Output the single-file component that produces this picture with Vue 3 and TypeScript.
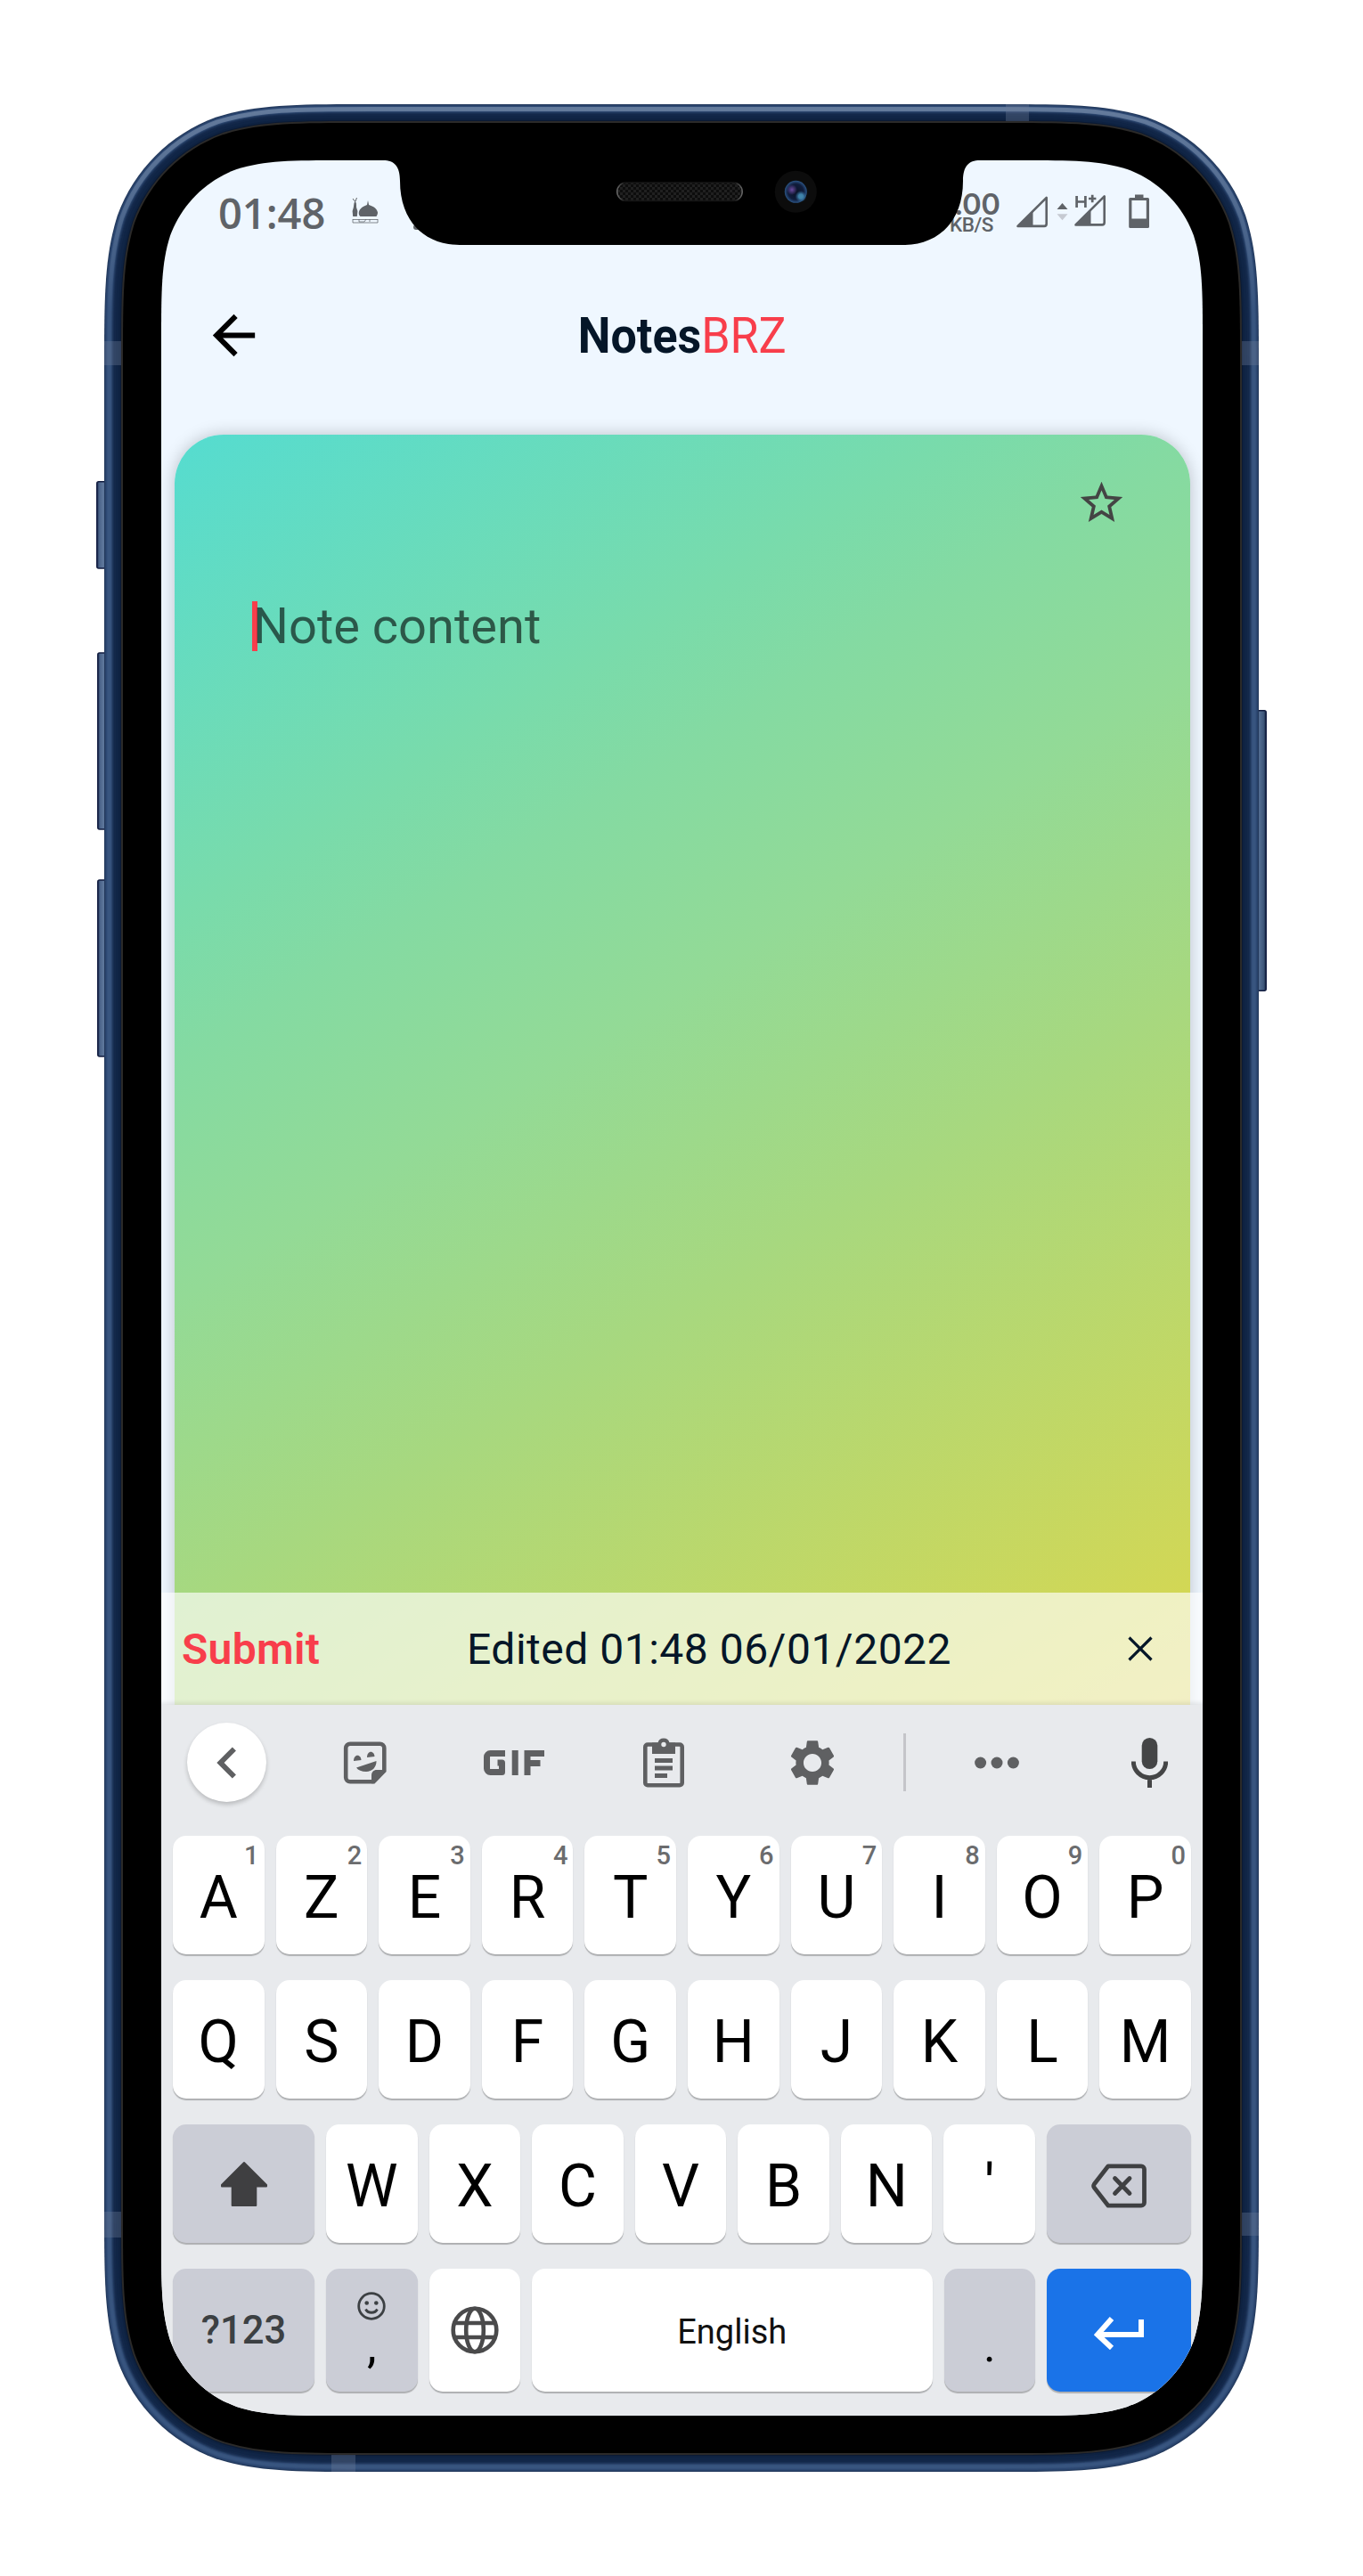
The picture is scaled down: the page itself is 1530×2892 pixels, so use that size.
<script setup lang="ts">
interface KeyDef {
  label: string
  hint?: string
}

interface Band {
  inset: number
  color: string
}

const topRow: KeyDef[] = [...'AZERTYUIOP'].map((label, i) => ({ label, hint: String((i + 1) % 10) }))
const homeRow: KeyDef[] = [...'QSDFGHJKLM'].map((label) => ({ label }))
const bottomRow: KeyDef[] = [..."WXCVBN'"].map((label) => ({ label }))

// Rounded rectangle with continuous (smoothed) corners.
function squircle(x: number, y: number, w: number, h: number, r: number): string {
  const corner = [
    [1.52866, 0], [1.08849, 0], [0.86841, 0], [0.63149, 0.07491],
    [0.37282, 0.16906], [0.16906, 0.37282], [0.07491, 0.63149],
    [0, 0.86841], [0, 1.08849], [0, 1.52866],
  ]
  const place = (sx: number, sy: number, reverse: boolean): string => {
    const pts = corner.map(([a, b]) => {
      const px = sx > 0 ? x + a * r : x + w - a * r
      const py = sy > 0 ? y + b * r : y + h - b * r
      return `${px.toFixed(2)} ${py.toFixed(2)}`
    })
    if (reverse) pts.reverse()
    return `${pts[0]} C${pts.slice(1, 4).join(' ')} C${pts.slice(4, 7).join(' ')} C${pts.slice(7, 10).join(' ')}`
  }
  return `M${place(1, 1, true)} L${place(-1, 1, false)} L${place(-1, -1, true)} L${place(1, -1, false)} Z`
}

const bands: Band[] = [
  { inset: 0, color: '#23395c' },
  { inset: 1, color: '#29436b' },
  { inset: 2, color: '#2d4872' },
  { inset: 3, color: '#34507b' },
  { inset: 4, color: '#38557f' },
  { inset: 7, color: '#34507a' },
  { inset: 8, color: '#2a446c' },
  { inset: 9, color: '#1f375c' },
  { inset: 10, color: '#182e52' },
  { inset: 11, color: '#13284a' },
  { inset: 13, color: '#102546' },
  { inset: 16, color: '#0e2241' },
  { inset: 18, color: '#0b1a33' },
  { inset: 19, color: '#2b2a29' },
  { inset: 21, color: '#000000' },
]

const bandPath = (inset: number): string =>
  squircle(inset, inset, 1296 - inset * 2, 2658 - inset * 2, 198 - inset)

const screenClip = { clipPath: `path("${squircle(0, 0, 1169, 2532, 134)}")` }
</script>

<template>
  <div class="page">
    <div class="phone">
      <svg class="frame" width="1314" height="2658" viewBox="-9 0 1314 2658">
        <defs>
          <linearGradient id="btnL" x1="0" x2="1" y1="0" y2="0">
            <stop offset="0" stop-color="#1b2b4f" />
            <stop offset=".18" stop-color="#4a6389" />
            <stop offset=".5" stop-color="#5f789c" />
            <stop offset="1" stop-color="#3f5a80" />
          </linearGradient>
          <linearGradient id="btnR" x1="1" x2="0" y1="0" y2="0">
            <stop offset="0" stop-color="#13233f" />
            <stop offset=".18" stop-color="#3d5679" />
            <stop offset=".5" stop-color="#526c90" />
            <stop offset="1" stop-color="#3a5479" />
          </linearGradient>
          <linearGradient id="shine" gradientUnits="userSpaceOnUse" x1="0" y1="0" x2="0" y2="230">
            <stop offset="0" stop-color="#8295b0" stop-opacity=".6" />
            <stop offset=".4" stop-color="#8295b0" stop-opacity=".4" />
            <stop offset="1" stop-color="#8295b0" stop-opacity="0" />
          </linearGradient>
        </defs>
        <g stroke="#121d40" stroke-width="1.5">
          <rect x="-8.2" y="423.7" width="14" height="97.2" rx="2" fill="url(#btnL)" />
          <rect x="-7.2" y="616" width="13" height="198" rx="2" fill="url(#btnL)" />
          <rect x="-7.2" y="871" width="13" height="198" rx="2" fill="url(#btnL)" />
          <rect x="1290" y="680.7" width="14.2" height="314.5" rx="2" fill="url(#btnR)" />
        </g>
        <path v-for="b in bands" :key="b.inset" :d="bandPath(b.inset)" :fill="b.color" />
        <path :d="bandPath(5.5)" fill="none" stroke="url(#shine)" stroke-width="5" />
        <g fill="#6c7c98" fill-opacity=".35">
          <rect x="0" y="266" width="19" height="27" />
          <rect x="1277" y="266" width="19" height="27" />
          <rect x="1012" y="0" width="26" height="19" />
          <rect x="0" y="2366" width="19" height="29" />
          <rect x="1277" y="2367" width="19" height="26" />
          <rect x="255" y="2639" width="27" height="19" />
        </g>
      </svg>

      <div class="screen" :style="screenClip">
        <div class="app">
          <div class="status">
            <span class="clock">01:48</span>
            <svg class="mosque" width="32" height="32" viewBox="0 0 32 32" fill="#5f6368">
              <path d="M3.4 7.5 4.6 4l1.3 3.5.2 4.5 1.3 4-.6 6H2.2l-.6-6 1.2-4z" />
              <path d="M2 2l2.400 3M6.500 1 5 5" stroke="#5f6368" fill="none" />
              <path d="M19 4l1.100 5c5 1.500 9.400 4.600 9.900 8.600 0 2-.8 3.400-1.500 4.400H10.500C9.300 21 8.500 19.400 8.800 17.400c.6-4 4.600-6.900 9.200-8.400z" />
              <path d="M2 25.500h28M2 29h28M2 25v4M9 25v3h6l2-3M21 25v3M30 25v4" stroke="#5f6368" stroke-width="1" fill="none" opacity=".75" />
            </svg>
            <span class="speck"></span>
            <div class="speed">
              <span class="rate">.00</span>
              <span class="unit">KB/S</span>
            </div>
            <svg class="signals" width="154" height="44" viewBox="0 0 154 44" fill="none" stroke="#5f6368">
              <path d="M5.500 36.900 37.700 4.800V34.300c0 1.700-1 2.600-2.600 2.600z" stroke-width="2.600" stroke-linejoin="round" />
              <path d="M5 37.500 22.500 20v17.500z" fill="#5f6368" stroke="none" />
              <path d="M49.500 18l6-7 6 7z" fill="#5f6368" stroke="none" />
              <path d="M49.500 23.300l6 7 6-7z" fill="#c6cad2" stroke="none" />
              <path d="M70.500 35.400 102.700 3.300V32.800c0 1.700-1 2.600-2.600 2.600z" stroke-width="2.600" stroke-linejoin="round" />
              <path d="M70 36 87.500 18.500V36z" fill="#5f6368" stroke="none" />
              <path d="M68 0h27v4.500L82 17.500H68z" fill="#eff7ff" stroke="none" />
              <path d="M71.600 3v13M81.400 3v13M71.600 9.500h9.800M85 6h8.400M89.200 1.800v8.400" stroke-width="2.700" />
              <path d="M131.800 6.500h19.600v31h-19.600z" stroke-width="3.200" stroke-linejoin="round" />
              <path d="M131 28.500h21v9h-21zM137 1.500h9.500v5H137z" fill="#5f6368" stroke="none" />
            </svg>
          </div>

          <header class="bar">
            <svg class="back" width="71" height="71" viewBox="0 0 24 24">
              <path d="M20 11H7.830l5.590-5.590L12 4l-8 8 8 8 1.410-1.410L7.830 13H20v-2z" />
            </svg>
            <h1 class="title"><b>Notes</b><span>BRZ</span></h1>
          </header>

          <main class="note">
            <svg class="star" width="57" height="57" viewBox="0 0 24 24" fill="#444">
              <path d="M22 9.240l-7.190-.62L12 2 9.190 8.630 2 9.240l5.460 4.730L5.820 21 12 17.270 18.180 21l-1.630-7.030L22 9.240zM12 15.400l-3.760 2.270 1-4.280-3.320-2.880 4.380-.38L12 6.100l1.710 4.040 4.380.38-3.320 2.880 1 4.280L12 15.400z" />
            </svg>
            <div class="field"><i class="caret"></i><span class="placeholder">Note content</span></div>
          </main>

          <div class="actions">
            <span class="submit">Submit</span>
            <span class="edited">Edited 01:48 06/01/2022</span>
            <svg class="close" width="28" height="28" viewBox="0 0 28 28" stroke="#051628" stroke-width="3.200">
              <path d="M1.500 1.500l25 25M26.500 1.500l-25 25" />
            </svg>
          </div>
        </div>

        <div class="keyboard">
          <div class="tools">
            <div class="tool">
              <span class="round">
                <svg width="70" height="70" viewBox="0 0 24 24" fill="#5f6062">
                  <path d="M15.410 7.410L14 6l-6 6 6 6 1.410-1.410L10.830 12z" />
                </svg>
              </span>
            </div>
            <div class="tool">
              <svg width="50" height="50" viewBox="0 0 50 50">
                <path d="M8 3.700h33.500a4.800 4.800 0 0 1 4.800 4.800V34L34.500 46.300H8a4.800 4.800 0 0 1-4.800-4.800V8.500A4.800 4.800 0 0 1 8 3.700z" fill="none" stroke="#5f6062" stroke-width="4.600" />
                <path d="M48 34 34.500 48.300H32V39.500c0-4 2.200-6.500 6-6.500h10zM12 23c0-4 2-6.300 4.300-6.300S20.500 19 20.500 22zM27 19c0-4 2-6.300 4.300-6.300S35.500 15 35.500 18zM15 30.500 37.500 23c.3 7-4.800 12-11.500 12-5 0-9-1.600-11-4.500z" fill="#5f6062" />
              </svg>
            </div>
            <div class="tool">
              <svg width="68" height="28" viewBox="0 0 68 28" fill="none" stroke="#5f6062" stroke-width="7">
                <path d="M24 3.500H7.500a4 4 0 0 0-4 4v13a4 4 0 0 0 4 4h13V14H15.500" stroke-linejoin="round" />
                <path d="M35.200 0v28M49 28V3.500h19M49 14.500h14.500" />
              </svg>
            </div>
            <div class="tool">
              <svg width="46" height="56" viewBox="0 0 46 56">
                <path d="M5 7.500h36a2.700 2.700 0 0 1 2.700 2.700v40.300a2.700 2.700 0 0 1-2.700 2.700H5a2.700 2.700 0 0 1-2.700-2.700V10.200A2.700 2.700 0 0 1 5 7.500z" fill="none" stroke="#5f6062" stroke-width="4.600" />
                <path d="M10 5.500h6.500a6.700 6.700 0 0 1 13 0H36V18H10zM13 23h20v5H13zM13 31.500h20v5H13zM13 40h14v5H13z" fill="#5f6062" />
                <circle cx="23" cy="7.500" r="2.700" fill="#e8eaed" />
              </svg>
            </div>
            <div class="tool">
              <svg width="62" height="62" viewBox="0 0 24 24" fill="#5f6062">
                <path d="M19.140 12.940c.04-.3.060-.61.060-.94 0-.32-.02-.64-.07-.94l2.030-1.580c.18-.14.23-.41.12-.61l-1.920-3.320c-.12-.22-.37-.29-.59-.22l-2.390.96c-.5-.38-1.030-.7-1.620-.94l-.36-2.540c-.04-.24-.24-.41-.48-.41h-3.840c-.24 0-.43.17-.47.41l-.36 2.540c-.59.24-1.130.57-1.620.94l-2.390-.96c-.22-.08-.47 0-.59.22L2.740 8.870c-.12.21-.08.47.12.61l2.030 1.580c-.05.3-.09.63-.09.94s.02.640.070.940l-2.030 1.580c-.18.14-.23.41-.12.61l1.920 3.320c.12.22.37.29.59.22l2.390-.96c.5.38 1.030.7 1.620.94l.36 2.540c.05.24.24.41.48.41h3.840c.24 0 .44-.17.47-.41l.36-2.540c.59-.24 1.130-.56 1.620-.94l2.390.96c.22.08.47 0 .59-.22l1.920-3.320c.12-.22.070-.47-.12-.61l-2.010-1.580zM12 15.900c-2.150 0-3.900-1.750-3.900-3.900s1.750-3.900 3.900-3.900 3.900 1.750 3.900 3.900-1.750 3.900-3.900 3.900z" />
              </svg>
            </div>
            <div class="tool"><span class="rule"></span></div>
            <div class="tool">
              <svg width="50" height="14" viewBox="0 0 50 14" fill="#5f6062">
                <circle cx="6.600" cy="7" r="6.500" />
                <circle cx="25" cy="7" r="6.500" />
                <circle cx="43.400" cy="7" r="6.500" />
              </svg>
            </div>
            <div class="tool mic">
              <svg width="41" height="56" viewBox="0 0 41 56">
                <rect x="11.700" y="0" width="17.600" height="35" rx="8.800" fill="#444546" />
                <path d="M2.300 26.500a18.200 18.200 0 0 0 36.400 0M20.500 44v12" fill="none" stroke="#444546" stroke-width="5" />
              </svg>
            </div>
          </div>

          <div class="row">
            <div v-for="k in topRow" :key="k.label" class="key">
              <sup class="hint">{{ k.hint }}</sup>{{ k.label }}
            </div>
          </div>
          <div class="row">
            <div v-for="k in homeRow" :key="k.label" class="key">{{ k.label }}</div>
          </div>
          <div class="row">
            <div class="key dark left">
              <svg width="54" height="52" viewBox="0 0 54 52" fill="#3f3f41" stroke="#3f3f41" stroke-width="2" stroke-linejoin="round">
                <path d="M27 2 52 27v1.500H40.300V50H13.700V28.500H2V27z" />
              </svg>
            </div>
            <div v-for="k in bottomRow" :key="k.label" class="key">{{ k.label }}</div>
            <div class="key dark right">
              <svg class="erase" width="64" height="52" viewBox="0 0 64 52" fill="none" stroke="#3f4042" stroke-width="4.800" stroke-linejoin="round" stroke-linecap="round">
                <path d="M20 3.800h37a3.500 3.500 0 0 1 3.500 3.500v37.400a3.500 3.500 0 0 1-3.500 3.500H20L4.300 28c-.9-1.300-.9-2.700 0-4z" />
                <path d="M27.500 17.500 44 34.500M44 17.500 27.500 34.500" />
              </svg>
            </div>
          </div>
          <div class="row last">
            <div class="key dark left symbols">?123</div>
            <div class="key dark fixed comma">
              <svg class="smile" width="34" height="34" viewBox="0 0 34 34" fill="none" stroke="#3c4043" stroke-width="2.800">
                <circle cx="17" cy="17" r="14.300" />
                <path d="M10.500 20.500c2.500 5 10.500 5 13 0" />
                <g fill="#3c4043" stroke="none"><circle cx="11.700" cy="13.500" r="2.300" /><circle cx="22.300" cy="13.500" r="2.300" /></g>
              </svg>
              <span>,</span>
            </div>
            <div class="key fixed">
              <svg width="54" height="54" viewBox="0 0 54 54" fill="none" stroke="#4a4a4b" stroke-width="4.600">
                <circle cx="27" cy="27" r="24.300" />
                <ellipse cx="27" cy="27" rx="9.800" ry="24.300" />
                <path d="M4.500 19h45M4.500 35h45" />
              </svg>
            </div>
            <div class="key space">English</div>
            <div class="key dark fixed dot"><span>.</span></div>
            <div class="key enter right">
              <svg width="58" height="38" viewBox="0 0 58 38" fill="none" stroke="#fff" stroke-width="6">
                <path d="M54 4v17H6M21 3 5 21 21 36" />
              </svg>
            </div>
          </div>
        </div>
      </div>

      <svg class="notch" width="680" height="100" viewBox="425 175 680 100">
        <defs>
          <pattern id="mesh" width="6" height="6" patternUnits="userSpaceOnUse">
            <rect width="6" height="6" fill="#0d0d0d" />
            <path d="M0 0h3v3H0zM3 3h3v3H3z" fill="#202020" />
          </pattern>
          <linearGradient id="rim" x1="0" x2="1" y1="0" y2="0">
            <stop offset="0" stop-color="#6a6a6a" />
            <stop offset=".06" stop-color="#151515" />
            <stop offset=".94" stop-color="#151515" />
            <stop offset="1" stop-color="#6a6a6a" />
          </linearGradient>
          <radialGradient id="violet"><stop offset="0" stop-color="#6a4a9e" /><stop offset="1" stop-color="#6a4a9e" stop-opacity="0" /></radialGradient>
          <radialGradient id="cyan"><stop offset="0" stop-color="#4388ac" /><stop offset=".4" stop-color="#3d7fa6" /><stop offset="1" stop-color="#2c6090" stop-opacity="0" /></radialGradient>
          <radialGradient id="lens"><stop offset="0" stop-color="#0a1226" /><stop offset=".7" stop-color="#101d3c" /><stop offset="1" stop-color="#2b5485" /></radialGradient>
        </defs>
        <path d="M425 175V180H430C443 180 449 187 449 203C449 250 478 275 516 275H1014C1052 275 1081 250 1081 203C1081 187 1087 180 1100 180H1105V175Z" fill="#000" />
        <rect x="692.700" y="205" width="140.500" height="20.500" rx="10.200" fill="url(#mesh)" stroke="url(#rim)" stroke-width="1.500" />
        <circle cx="893.300" cy="215.300" r="23.500" fill="#0c0c0c" />
        <circle cx="893.300" cy="215.300" r="12.500" fill="url(#lens)" />
        <circle cx="889" cy="213" r="6" fill="url(#violet)" />
        <circle cx="899" cy="220.500" r="6.500" fill="url(#cyan)" />
      </svg>
    </div>
  </div>
</template>

<style>
html,
body {
  margin: 0;
  background: #fff;
}
</style>

<style scoped>
.page {
  box-sizing: border-box;
  width: 1530px;
  height: 2892px;
  padding: 117px;
  background: #fff;
  font-family: Roboto, "Liberation Sans", sans-serif;
  overflow: hidden;
}
.phone {
  position: relative;
  box-sizing: border-box;
  width: 1296px;
  height: 2658px;
  padding: 63px 63px 63px 64px;
}
.frame {
  position: absolute;
  left: -9px;
  top: 0;
}
.notch {
  position: absolute;
  left: 308px;
  top: 58px;
}
.screen {
  position: relative;
  display: flex;
  flex-direction: column;
  width: 1169px;
  height: 2532px;
  background: #eff7ff;
  overflow: hidden;
}
.app {
  position: relative;
  flex: none;
  display: flex;
  flex-direction: column;
  height: 1734px;
  overflow: hidden;
}
.status {
  display: flex;
  align-items: center;
  box-sizing: border-box;
  height: 118px;
  padding: 0 59px 0 64px;
  color: #5f6368;
}
.clock {
  width: 149px;
  font: 600 47px/60px "Open Sans", "Noto Sans", sans-serif;
}
.mosque {
  margin-top: -4px;
}
.speck {
  width: 12px;
  height: 6px;
  margin: 32px 0 0 38px;
  border-radius: 3px;
  background: #5f6368;
}
.speed {
  flex: none;
  display: flex;
  flex-direction: column;
  gap: 1px;
  width: 71px;
  margin-left: auto;
}
.rate {
  padding-left: 5px;
  font: 600 33px/26px Inter, "Open Sans", sans-serif;
  letter-spacing: -0.5px;
}
.unit {
  font: 500 22.5px/19px Roboto, sans-serif;
  letter-spacing: -0.5px;
}
.signals {
  flex: none;
}
.bar {
  display: grid;
  grid-template-columns: 1fr auto 1fr;
  align-items: center;
  height: 157px;
}
.back {
  margin-left: 46px;
}
.title {
  margin: 0;
  font-size: 55px;
  font-weight: 400;
  line-height: 70px;
  color: #051628;
  transform: scaleX(0.945);
}
.title b {
  font-weight: 700;
}
.title span {
  color: #f83e4b;
}
.note {
  flex: 1;
  display: flex;
  flex-direction: column;
  margin: 33px 14px -40px 15px;
  border-radius: 55px 55px 0 0;
  background: linear-gradient(148.4deg, #55dcd0 0, #79dbab 463px, #84daa2 597px, #93da96 829px, #a7d87f 1127px, #d2d755 1700px, #dfd058 1860px);
  box-shadow: 0 0 18px rgba(0, 0, 0, 0.22);
}
.star {
  align-self: flex-end;
  margin: 48px 71px 0 0;
}
.field {
  display: flex;
  align-items: center;
  height: 56px;
  margin: 82px 0 0 87px;
}
.caret {
  width: 6px;
  height: 56px;
  background: #f83e4b;
}
.placeholder {
  margin-left: -5px;
  font-size: 56px;
  color: rgba(0, 0, 0, 0.6);
  white-space: nowrap;
}
.actions {
  position: absolute;
  left: 0;
  right: 0;
  bottom: 0;
  display: flex;
  align-items: center;
  box-sizing: border-box;
  height: 126px;
  padding: 2px 56px 0 23px;
  background: rgba(255, 255, 255, 0.65);
  box-shadow: inset 0 -6px 6px -5px rgba(0, 0, 0, 0.12);
  font-size: 48px;
  line-height: 60px;
  letter-spacing: 0.5px;
  white-space: nowrap;
}
.submit {
  width: 320px;
  font-weight: 600;
  letter-spacing: 0.3px;
  color: #f83e4b;
}
.edited {
  color: #051628;
}
.close {
  margin: -3px 0 0 auto;
}
.keyboard {
  flex: 1;
  display: flex;
  flex-direction: column;
  background: #e8eaed;
}
.tools {
  flex: none;
  display: grid;
  grid-template-columns: 147px 164px 170px 165px 170px 37px 170px 146px;
  align-items: center;
  height: 129px;
  margin-bottom: 18px;
}
.tool {
  display: flex;
  justify-content: center;
}
.mic {
  padding-left: 27px;
}
.round {
  display: flex;
  align-items: center;
  justify-content: center;
  width: 89px;
  height: 89px;
  border-radius: 50%;
  background: #fff;
  box-shadow: 0 3px 5px rgba(0, 0, 0, 0.2);
}
.rule {
  width: 3px;
  height: 65px;
  background: #c4c5c9;
}
.row {
  flex: none;
  display: flex;
  gap: 13px;
  height: 133px;
  margin: 0 13px 29px;
}
.row.last {
  height: 138px;
  margin-bottom: 0;
}
.key {
  position: relative;
  flex: 1 1 0;
  display: flex;
  align-items: center;
  justify-content: center;
  box-sizing: border-box;
  padding-top: 7px;
  border-radius: 15px;
  background: #fff;
  box-shadow: 0 2px 1px rgba(0, 0, 0, 0.25);
  font-size: 66px;
  line-height: 1;
  color: #000;
}
.key.dark {
  background: #cbcdd6;
}
.key.left,
.key.right {
  flex: none;
  width: 159px;
  padding-top: 0;
}
.key.right {
  width: 162px;
}
.key.fixed {
  flex: none;
  width: 102.5px;
  padding-top: 0;
}
.key.right.enter {
  background: #1a73e8;
  padding-top: 6px;
}
.key.symbols {
  padding-top: 2px;
  font-size: 43.5px;
  font-weight: 500;
  color: #3c4043;
}
.key.space {
  padding-top: 4px;
  font-size: 38px;
  color: #111;
}
.erase {
  margin-top: 4px;
}
.hint {
  position: absolute;
  top: 6px;
  right: 6px;
  font-size: 29px;
  font-weight: 500;
  line-height: 32px;
  color: #6b6c6e;
}
.key.comma {
  flex-direction: column;
  justify-content: flex-start;
  padding-top: 25px;
}
.comma span {
  font-size: 54px;
  line-height: 56px;
}
.key.dot {
  align-items: flex-start;
  padding-top: 58px;
}
.dot span {
  font-size: 52px;
  line-height: 58px;
}
</style>
